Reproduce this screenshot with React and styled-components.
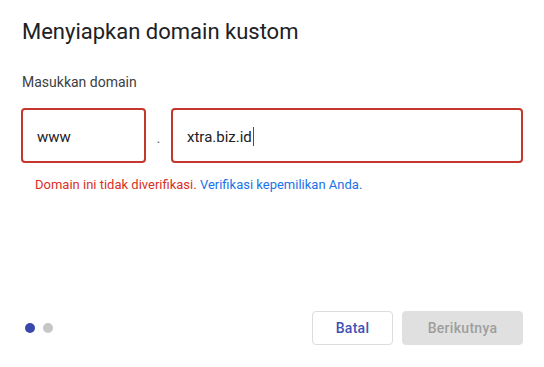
import React from "react";
import styled, { createGlobalStyle } from "styled-components";

const Global = createGlobalStyle`
  html, body {
    margin: 0;
    padding: 0;
    background: #ffffff;
  }
  body {
    font-family: Roboto, "Noto Sans", Arial, sans-serif;
    -webkit-font-smoothing: antialiased;
  }
`;

export default function App() {
  return (
    <>
      <Global />
      <Dialog>
        <Title>Menyiapkan domain kustom</Title>
        <Label>Masukkan domain</Label>
        <FieldRow>
          <Field width="125px">
            <FieldText>www</FieldText>
          </Field>
          <Separator>.</Separator>
          <Field grow>
            <FieldText>
              xtra.biz.id
              <Caret />
            </FieldText>
          </Field>
        </FieldRow>
        <Message>
          <ErrorText>Domain ini tidak diverifikasi.</ErrorText>{" "}
          <Link href="#">Verifikasi kepemilikan Anda.</Link>
        </Message>
        <Footer>
          <Steps>
            <Dot active />
            <Dot />
          </Steps>
          <Actions>
            <Button>Batal</Button>
            <Button primary disabled>
              Berikutnya
            </Button>
          </Actions>
        </Footer>
      </Dialog>
    </>
  );
}

const Dialog = styled.div`
  width: 544px;
  height: 367px;
  box-sizing: border-box;
  padding: 18px 21px 0 21px;
  display: flex;
  flex-direction: column;
`;

const Title = styled.h2`
  margin: 0;
  font-size: 22px;
  line-height: 28px;
  font-weight: 400;
  color: #202124;
  padding-left: 1px;
`;

const Label = styled.div`
  margin-top: 26px;
  font-size: 14px;
  line-height: 20px;
  color: #3c4043;
  padding-left: 1px;
`;

const FieldRow = styled.div`
  margin-top: 16px;
  display: flex;
  align-items: stretch;
  height: 55px;
`;

const Field = styled.div`
  box-sizing: border-box;
  width: ${(p) => p.width || "auto"};
  flex: ${(p) => (p.grow ? "1" : "none")};
  border: 2px solid #c5372c;
  border-radius: 4px;
  display: flex;
  align-items: center;
  padding: 0 14px;
`;

const FieldText = styled.div`
  font-size: 15px;
  line-height: 20px;
  color: #202124;
  display: flex;
  align-items: center;
  padding-top: 2px;
`;

const Caret = styled.span`
  display: inline-block;
  width: 1px;
  height: 19px;
  margin-left: 1px;
  background: #b3261e;
`;

const Separator = styled.span`
  width: 25px;
  text-align: center;
  align-self: center;
  padding-top: 4px;
  font-size: 15px;
  color: #5f6368;
`;

const Message = styled.div`
  margin-top: 13px;
  padding-left: 14px;
  font-size: 13px;
  line-height: 17px;
`;

const ErrorText = styled.span`
  color: #d93025;
`;

const Link = styled.a`
  color: #1a73e8;
  text-decoration: none;
`;

const Footer = styled.div`
  margin-top: auto;
  margin-bottom: 22px;
  display: flex;
  align-items: center;
  justify-content: space-between;
`;

const Steps = styled.div`
  display: flex;
  align-items: center;
  gap: 8px;
  padding-left: 4px;
`;

const Dot = styled.span`
  width: 10px;
  height: 10px;
  border-radius: 50%;
  background: ${(p) => (p.active ? "#3949ab" : "#c6c6c6")};
`;

const Actions = styled.div`
  display: flex;
  gap: 9px;
`;

const Button = styled.button`
  box-sizing: border-box;
  height: 34px;
  min-width: ${(p) => (p.primary ? "121px" : "81px")};
  padding: 0 16px;
  border-radius: 4px;
  border: 1px solid ${(p) => (p.primary ? "#e0e0e0" : "#dadce0")};
  background: ${(p) => (p.primary ? "#e0e0e0" : "#ffffff")};
  color: ${(p) => (p.primary ? "#9e9e9e" : "#3f51b5")};
  font-family: Roboto, Arial, sans-serif;
  font-size: 14px;
  font-weight: 500;
  letter-spacing: 0.3px;
  cursor: pointer;
`;
